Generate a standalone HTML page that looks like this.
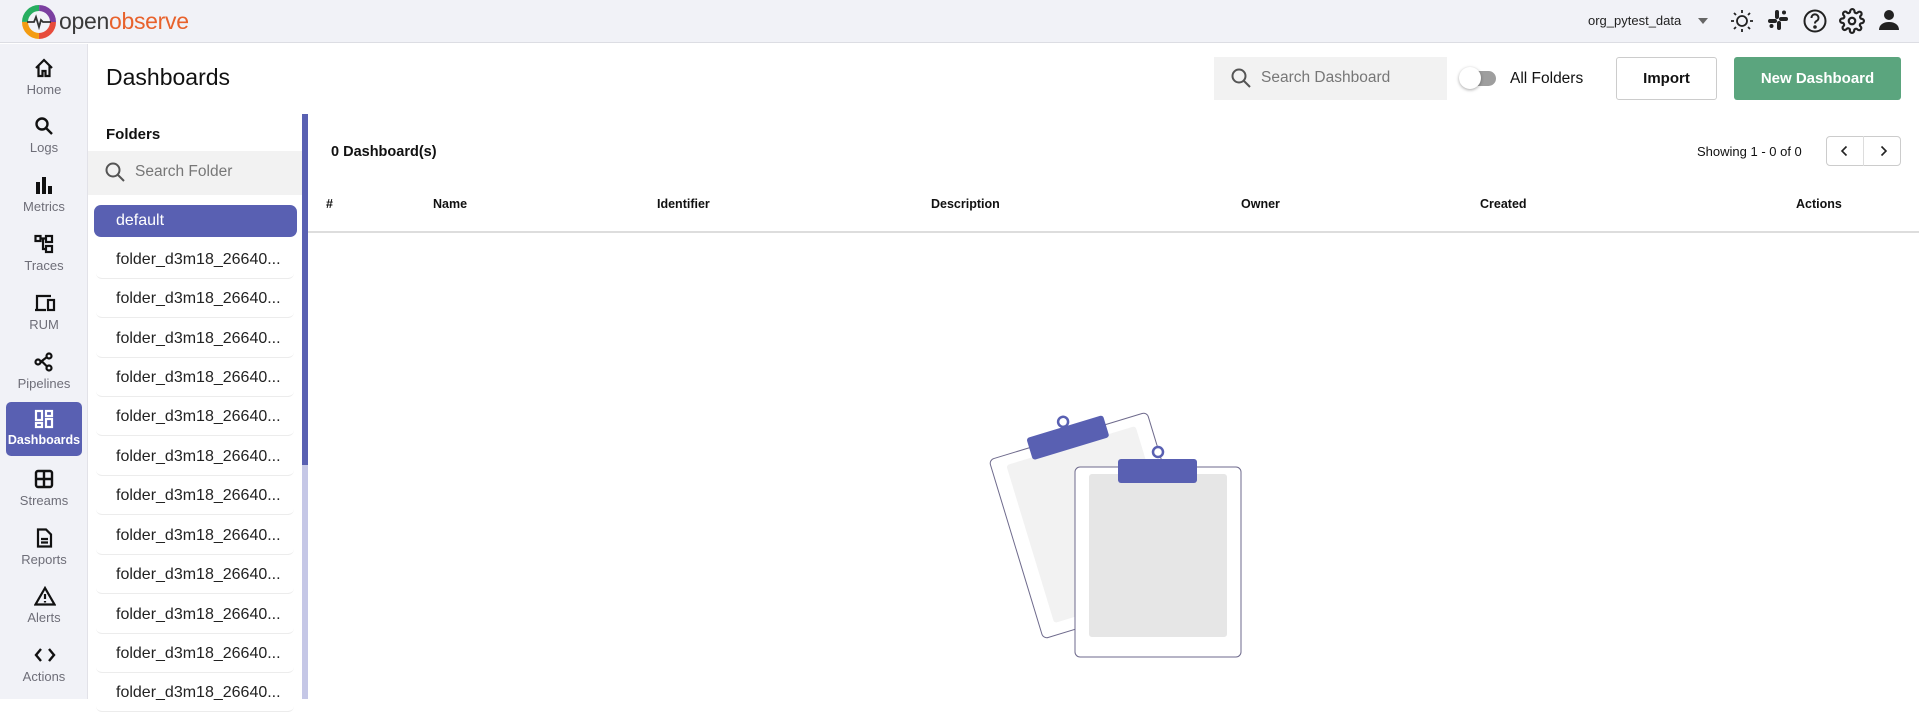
<!DOCTYPE html>
<html><head><meta charset="utf-8"><style>
*{box-sizing:border-box;margin:0;padding:0}
body{width:1919px;height:699px;overflow:hidden;background:#fff;font-family:"Liberation Sans",sans-serif;position:relative;color:#111}
.abs{position:absolute}
#hdr{left:0;top:0;width:1919px;height:43px;background:#f1f2f7;border-bottom:1px solid #dcdde3}
#side{left:0;top:44px;width:88px;height:655px;background:#f1f2f7;border-right:1px solid #e2e2e8}
.ni{position:absolute;left:6px;width:76px;height:54px;text-align:center}
.ni svg{position:absolute;left:28px;top:4px}
.ni span{position:absolute;left:0;right:0;top:28px;font-size:13px;color:#6e6e78}
.ni.act{background:#5960b2;border-radius:5px}
.ni.act span{color:#fff}
.fi{position:absolute;left:96px;width:198px;height:36px;border-bottom:1px solid #ececec;border-radius:6px;font-size:16px;color:#222;padding-left:20px;line-height:34px;white-space:nowrap}
.th{position:absolute;top:197px;font-size:12.5px;font-weight:bold}
</style></head><body>
<div id="hdr" class="abs">
 <svg class="abs" style="left:20px;top:3px" width="38" height="38" viewBox="0 0 38 38">
  <circle cx="19" cy="19" r="14" fill="none" stroke="#e74c3c" stroke-width="6" stroke-dasharray="22 66"/>
  <circle cx="19" cy="19" r="14" fill="none" stroke="#f39c12" stroke-width="6" stroke-dasharray="22 66" stroke-dashoffset="-22"/>
  <circle cx="19" cy="19" r="14" fill="none" stroke="#27ae60" stroke-width="6" stroke-dasharray="22 66" stroke-dashoffset="-44"/>
  <circle cx="19" cy="19" r="14" fill="none" stroke="#7b3fa0" stroke-width="6" stroke-dasharray="22 66" stroke-dashoffset="-66"/>
  <path d="M7 19h7l2-5 3 10 2-7 2 2h8" fill="none" stroke="#333" stroke-width="1.8"/>
 </svg>
 <div class="abs" style="left:59px;top:8px;font-size:23px;letter-spacing:-0.3px"><span style="color:#3a3a3a">open</span><span style="color:#e8622c">observe</span></div>
 <div class="abs" style="left:1588px;top:13px;font-size:13px;color:#222">org_pytest_data</div>
 <div class="abs" style="left:1698px;top:18px;width:0;height:0;border-left:5px solid transparent;border-right:5px solid transparent;border-top:6px solid #666"></div>
 <svg class="abs" style="left:1729px;top:8px" width="26" height="26" viewBox="0 0 26 26" fill="none" stroke="#222" stroke-width="1.8"><circle cx="13" cy="13" r="5"/><path d="M13 2v3M13 21v3M2 13h3M21 13h3M5 5l2 2M19 19l2 2M5 21l2-2M19 7l2-2"/></svg>
 <svg class="abs" style="left:1767px;top:9px" width="22" height="22" viewBox="0 0 22 22" fill="#222"><rect x="8" y="1" width="4" height="9" rx="2"/><rect x="10" y="12" width="4" height="9" rx="2"/><rect x="1" y="10" width="9" height="4" rx="2"/><rect x="12" y="8" width="9" height="4" rx="2"/><circle cx="17" cy="3.5" r="2"/><circle cx="4.5" cy="17" r="2"/></svg>
 <svg class="abs" style="left:1802px;top:8px" width="26" height="26" viewBox="0 0 26 26" fill="none" stroke="#222" stroke-width="2"><circle cx="13" cy="13" r="10.5"/><path d="M9.5 10a3.5 3.5 0 1 1 5 3c-1.2.6-1.5 1.3-1.5 2.5"/><circle cx="13" cy="19" r=".8" fill="#222"/></svg>
 <svg class="abs" style="left:1839px;top:8px" width="26" height="26" viewBox="0 0 24 24" fill="none" stroke="#222" stroke-width="2"><circle cx="12" cy="12" r="3"/><path d="M19.4 15a1.7 1.7 0 0 0 .3 1.8l.1.1a2 2 0 1 1-2.8 2.8l-.1-.1a1.7 1.7 0 0 0-2.9 1.2V21a2 2 0 1 1-4 0v-.1A1.7 1.7 0 0 0 7 19.4l-.1.1a2 2 0 1 1-2.8-2.8l.1-.1A1.7 1.7 0 0 0 3 13.7H3a2 2 0 1 1 0-4h.1A1.7 1.7 0 0 0 4.6 7l-.1-.1a2 2 0 1 1 2.8-2.8l.1.1A1.7 1.7 0 0 0 10.3 3V3a2 2 0 1 1 4 0v.1a1.7 1.7 0 0 0 2.9 1.2l.1-.1a2 2 0 1 1 2.8 2.8l-.1.1a1.7 1.7 0 0 0 1.2 2.9H21a2 2 0 1 1 0 4h-.1a1.7 1.7 0 0 0-1.5 1z"/></svg>
 <svg class="abs" style="left:1877px;top:8px" width="24" height="24" viewBox="0 0 24 24" fill="#222"><circle cx="12" cy="7" r="5"/><path d="M2 22c0-5 4-8 10-8s10 3 10 8z"/></svg>
</div>

<div id="side" class="abs">
 <div class="ni" style="top:10px"><svg width="20" height="20" viewBox="0 0 20 20" fill="none" stroke="#111" stroke-width="2.2"><path d="M2 10L10 2l8 8M4.5 8v10h4v-5h3v5h4V8"/></svg><span>Home</span></div>
 <div class="ni" style="top:68px"><svg width="20" height="20" viewBox="0 0 20 20" fill="none" stroke="#111" stroke-width="2.4"><circle cx="8" cy="8" r="5.5"/><path d="M12 12l6 6"/></svg><span>Logs</span></div>
 <div class="ni" style="top:127px"><svg width="20" height="20" viewBox="0 0 20 20" fill="#111"><rect x="2" y="7" width="4" height="12"/><rect x="8" y="2" width="4" height="17"/><rect x="14" y="11" width="4" height="8"/></svg><span>Metrics</span></div>
 <div class="ni" style="top:186px"><svg width="20" height="20" viewBox="0 0 20 20" fill="none" stroke="#111" stroke-width="2.2"><rect x="1.5" y="2" width="5" height="5"/><rect x="12" y="2" width="6" height="6"/><rect x="12" y="12" width="6" height="6"/><path d="M6.5 4.5H12M9 4.5V15h3"/></svg><span>Traces</span></div>
 <div class="ni" style="top:245px"><svg width="22" height="20" viewBox="0 0 22 20" fill="none" stroke="#111" stroke-width="2.2"><path d="M3 16V3h14M1 17h11"/><rect x="14" y="7" width="6" height="10"/></svg><span>RUM</span></div>
 <div class="ni" style="top:304px"><svg width="20" height="20" viewBox="0 0 20 20" fill="none" stroke="#111" stroke-width="2.2"><circle cx="4" cy="10" r="2.5"/><circle cx="15" cy="4" r="2.5"/><circle cx="15" cy="16" r="2.5"/><path d="M6.5 10l6.5-5M6.5 10h2l4.5 4.5"/></svg><span>Pipelines</span></div>
 <div class="ni act" style="top:358px"><svg width="20" height="20" viewBox="0 0 20 20" fill="none" stroke="#fff" stroke-width="2.2" style="top:7px"><rect x="2" y="2" width="6" height="9"/><rect x="12" y="2" width="6" height="5"/><rect x="12" y="10" width="6" height="8"/><rect x="2" y="14" width="6" height="4"/></svg><span style="top:31px;font-weight:bold;font-size:12.5px">Dashboards</span></div>
 <div class="ni" style="top:421px"><svg width="20" height="20" viewBox="0 0 20 20" fill="none" stroke="#111" stroke-width="2.4"><rect x="2" y="2" width="16" height="16" rx="2"/><path d="M10 2v16M2 10h16"/></svg><span>Streams</span></div>
 <div class="ni" style="top:480px"><svg width="20" height="20" viewBox="0 0 20 20" fill="none" stroke="#111" stroke-width="2.2"><path d="M4 1.5h8l5 5V18.5H4z"/><path d="M7 11h7M7 14.5h7"/></svg><span>Reports</span></div>
 <div class="ni" style="top:538px"><svg width="22" height="20" viewBox="0 0 22 20" fill="none" stroke="#111" stroke-width="2.2"><path d="M11 2L1.5 18.5h19z"/><path d="M11 8v5M11 15v1.5"/></svg><span>Alerts</span></div>
 <div class="ni" style="top:597px"><svg width="22" height="20" viewBox="0 0 22 20" fill="none" stroke="#111" stroke-width="2.4"><path d="M7 4l-5 6 5 6M15 4l5 6-5 6"/></svg><span>Actions</span></div>
</div>

<div class="abs" style="left:106px;top:64px;font-size:23px;color:#111">Dashboards</div>
<div class="abs" style="left:1214px;top:57px;width:233px;height:43px;background:#f2f2f2"></div>
<svg class="abs" style="left:1230px;top:67px" width="22" height="22" viewBox="0 0 22 22" fill="none" stroke="#555" stroke-width="2"><circle cx="9" cy="9" r="6.5"/><path d="M14 14l6 6"/></svg>
<div class="abs" style="left:1261px;top:69px;font-size:15.5px;color:#777">Search Dashboard</div>
<div class="abs" style="left:1463px;top:71px;width:33px;height:15px;border-radius:8px;background:#9e9e9e"></div>
<div class="abs" style="left:1459px;top:67px;width:22px;height:22px;border-radius:50%;background:#fff;box-shadow:0 1px 3px rgba(0,0,0,.35)"></div>
<div class="abs" style="left:1510px;top:70px;font-size:15.5px;color:#111">All Folders</div>
<div class="abs" style="left:1616px;top:57px;width:101px;height:43px;border:1px solid #ccc;border-radius:3px;text-align:center;line-height:41px;font-size:15px;font-weight:bold">Import</div>
<div class="abs" style="left:1734px;top:57px;width:167px;height:43px;background:#5ba57e;border-radius:3px;text-align:center;line-height:43px;font-size:15px;font-weight:bold;color:#fff">New Dashboard</div>

<div class="abs" style="left:106px;top:126px;font-size:15px;font-weight:bold">Folders</div>
<div class="abs" style="left:88px;top:151px;width:214px;height:44px;background:#f2f2f2"></div>
<svg class="abs" style="left:104px;top:161px" width="22" height="22" viewBox="0 0 22 22" fill="none" stroke="#555" stroke-width="2"><circle cx="9" cy="9" r="6.5"/><path d="M14 14l6 6"/></svg>
<div class="abs" style="left:135px;top:163px;font-size:15.5px;color:#777">Search Folder</div>
<div class="abs" style="left:94px;top:205px;width:203px;height:32px;background:#5960b2;border-radius:7px;color:#fff;font-size:16px;padding-left:22px;line-height:32px">default</div>
<div class="fi" style="top:243px">folder_d3m18_26640...</div>
<div class="fi" style="top:282px">folder_d3m18_26640...</div>
<div class="fi" style="top:322px">folder_d3m18_26640...</div>
<div class="fi" style="top:361px">folder_d3m18_26640...</div>
<div class="fi" style="top:400px">folder_d3m18_26640...</div>
<div class="fi" style="top:440px">folder_d3m18_26640...</div>
<div class="fi" style="top:479px">folder_d3m18_26640...</div>
<div class="fi" style="top:519px">folder_d3m18_26640...</div>
<div class="fi" style="top:558px">folder_d3m18_26640...</div>
<div class="fi" style="top:598px">folder_d3m18_26640...</div>
<div class="fi" style="top:637px">folder_d3m18_26640...</div>
<div class="fi" style="top:676px">folder_d3m18_26640...</div>
<div class="abs" style="left:302px;top:114px;width:6px;height:585px;background:#c5c7e6"></div>
<div class="abs" style="left:302px;top:114px;width:6px;height:351px;background:#5960b2"></div>

<div class="abs" style="left:331px;top:144px;font-size:14.5px;font-weight:bold">0 Dashboard(s)</div>
<div class="abs" style="left:1697px;top:144px;font-size:13px">Showing 1 - 0 of 0</div>
<div class="abs" style="left:1826px;top:136px;width:75px;height:30px;border:1px solid #ccc;border-radius:4px"></div>
<div class="abs" style="left:1863px;top:136px;width:1px;height:30px;background:#ddd"></div>
<svg class="abs" style="left:1838px;top:145px" width="14" height="12" viewBox="0 0 14 12" fill="none" stroke="#222" stroke-width="1.6"><path d="M8.5 1.5L4 6l4.5 4.5"/></svg>
<svg class="abs" style="left:1876px;top:145px" width="14" height="12" viewBox="0 0 14 12" fill="none" stroke="#222" stroke-width="1.6"><path d="M5.5 1.5L10 6l-4.5 4.5"/></svg>
<div class="th" style="left:326px">#</div>
<div class="th" style="left:433px">Name</div>
<div class="th" style="left:657px">Identifier</div>
<div class="th" style="left:931px">Description</div>
<div class="th" style="left:1241px">Owner</div>
<div class="th" style="left:1480px">Created</div>
<div class="th" style="left:1796px">Actions</div>
<div class="abs" style="left:308px;top:231px;width:1611px;height:2px;background:#ddd"></div>

<svg class="abs" style="left:0;top:0" width="1919" height="699">
 <g transform="translate(989,460) rotate(-16.9)">
  <rect x="0" y="0" width="165" height="187" rx="5" fill="#fff" stroke="#6e6a8c" stroke-width="1"/>
  <rect x="15" y="10" width="135" height="165" rx="3" fill="#f2f2f2"/>
  <circle cx="82" cy="-15" r="5" fill="#fff" stroke="#5960b2" stroke-width="2.5"/>
  <rect x="42" y="-10" width="80" height="23" rx="3" fill="#5960b2"/>
 </g>
 <rect x="1075" y="467" width="166" height="190" rx="5" fill="#fff" stroke="#6e6a8c" stroke-width="1"/>
 <rect x="1089" y="474" width="138" height="163" rx="3" fill="#e6e6e6"/>
 <circle cx="1158" cy="452" r="5" fill="#fff" stroke="#5960b2" stroke-width="2.5"/>
 <rect x="1118" y="459" width="79" height="24" rx="3" fill="#5960b2"/>
</svg>
</body></html>
